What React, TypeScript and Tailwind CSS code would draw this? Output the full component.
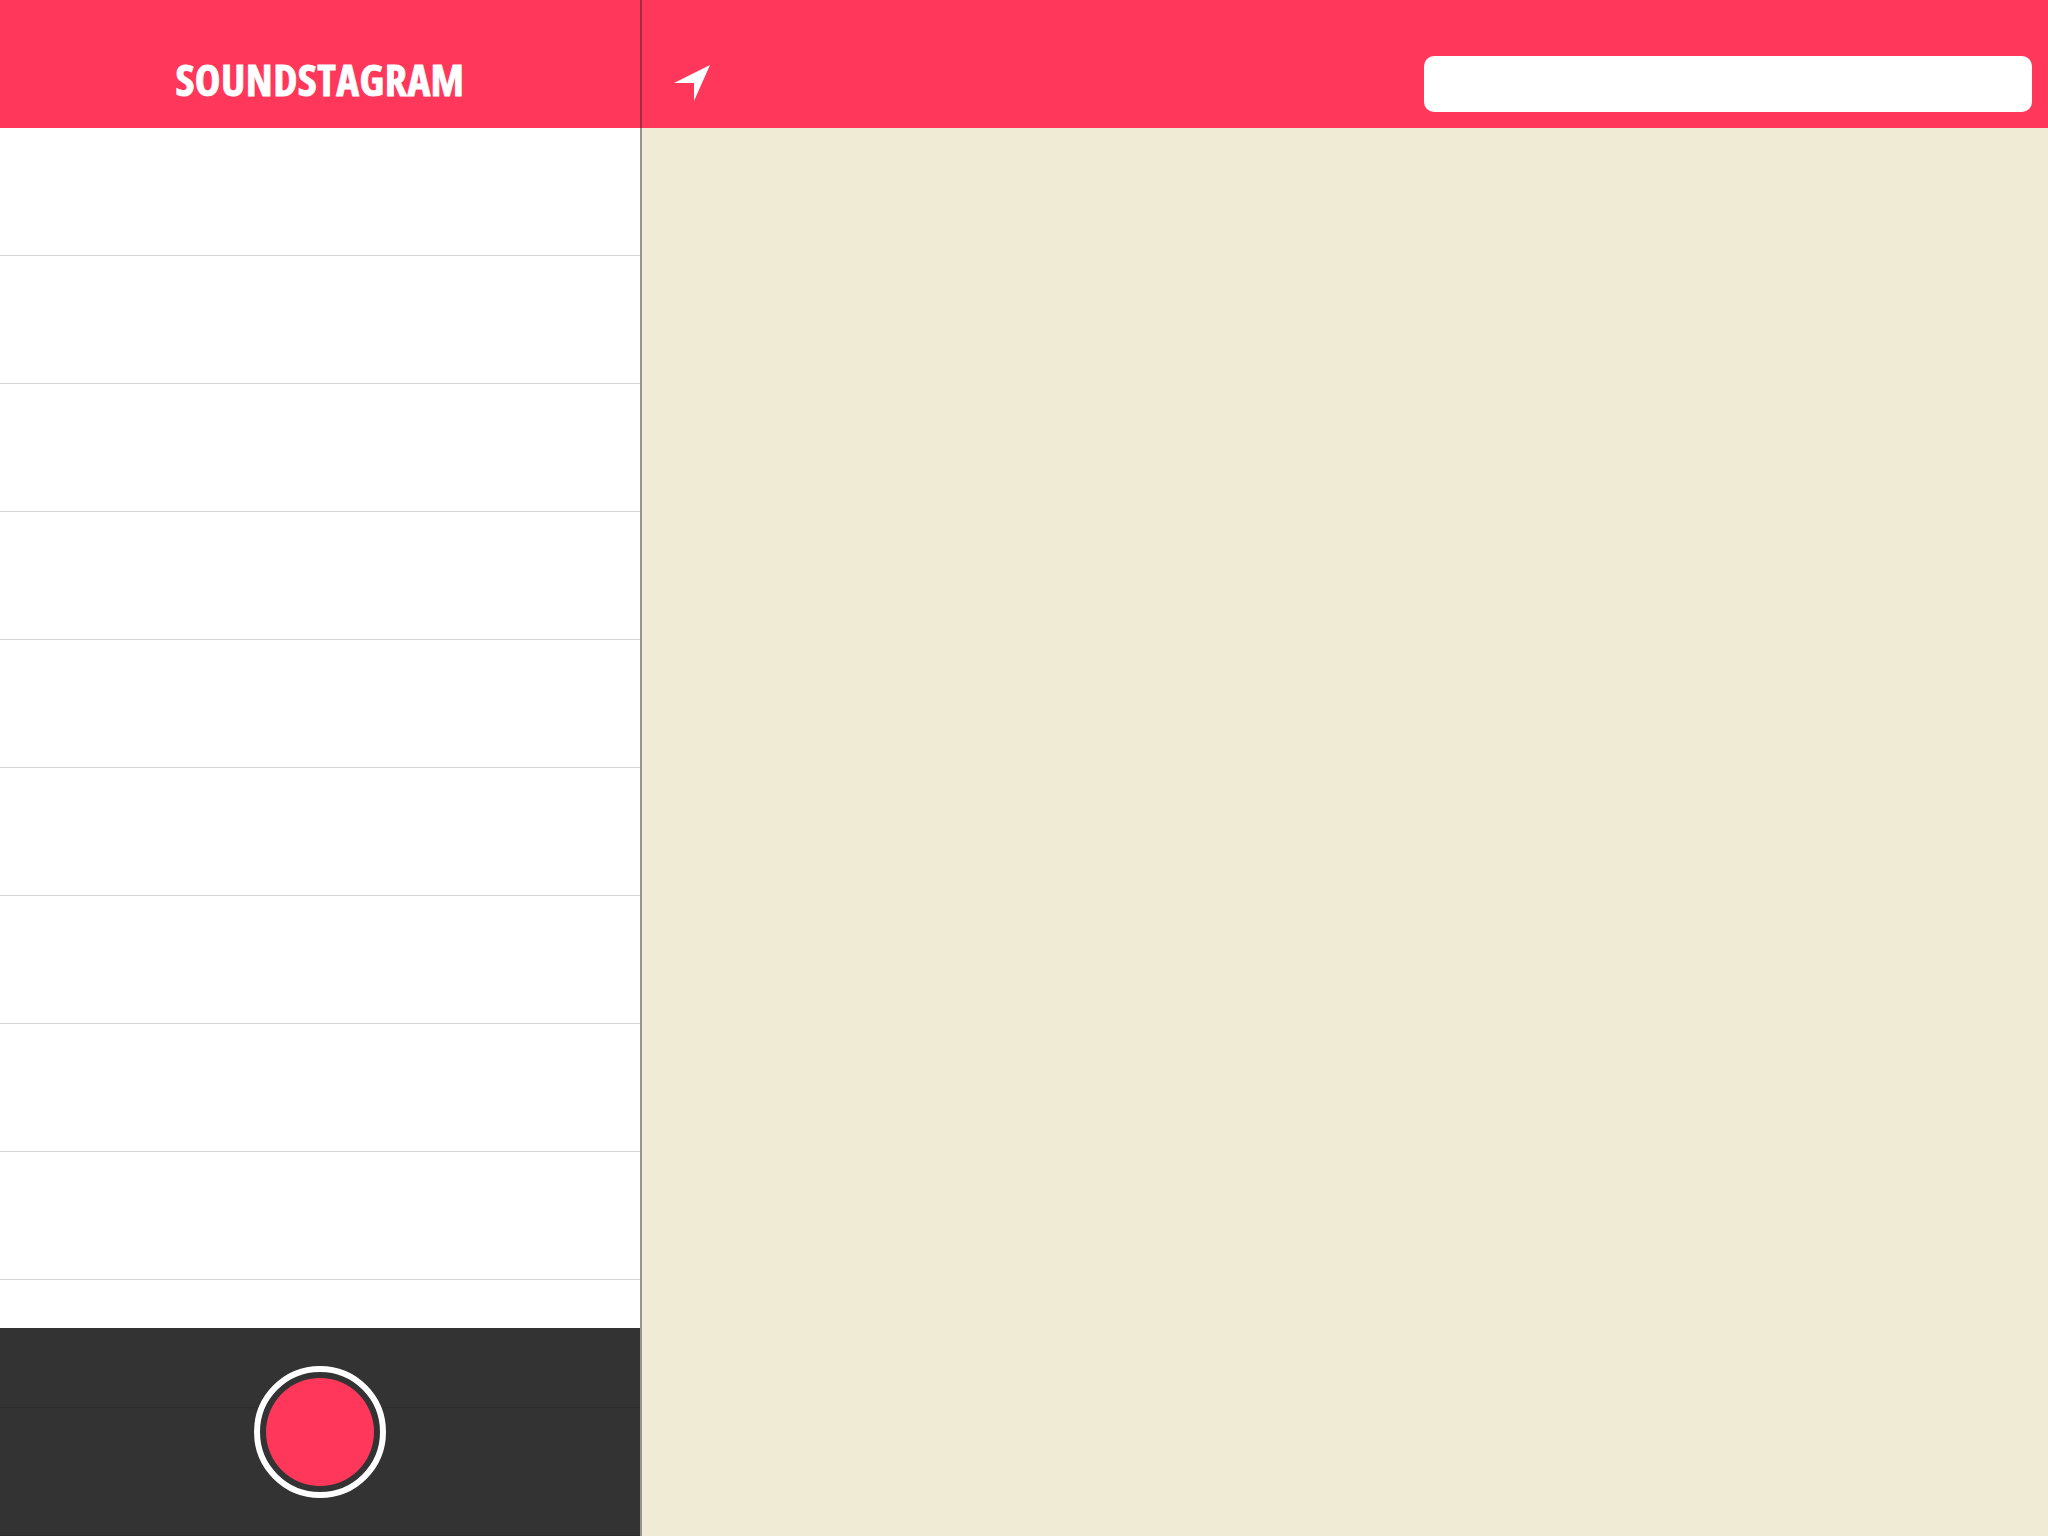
const rows = Array.from({ length: 9 }, (_, i) => i);

function Sidebar() {
  return (
    <aside className="flex h-full w-[640px] shrink-0 flex-col bg-white">
      <header className="flex h-32 shrink-0 items-end justify-center bg-[#ff375b]">
        <h1 className="mb-[19px] whitespace-nowrap font-['Open_Sans',sans-serif] text-[43.4px] leading-[59px] font-bold tracking-[0.4px] text-white [-webkit-text-stroke:0.8px_white] [font-stretch:75%]">
          SOUNDSTAGRAM
        </h1>
      </header>
      <ul className="min-h-0 flex-1 overflow-hidden">
        {rows.map((row) => (
          <li key={row} className="h-32 border-b border-[#d6d6d6]" />
        ))}
      </ul>
      <footer className="grid h-52 shrink-0 grid-cols-1 grid-rows-[80px_128px] bg-[#333333]">
        <div className="col-start-1 row-start-1 border-b border-[#2c2c2c]" />
        <div className="col-start-1 row-start-2 border-b border-[#2c2c2c]" />
        <button
          aria-label="Record"
          className="z-10 col-start-1 row-span-2 row-start-1 grid size-[132px] place-items-center self-center justify-self-center rounded-full border-[6px] border-white bg-[#333333]"
        >
          <span className="size-[108px] rounded-full bg-[#ff375b]" />
        </button>
      </footer>
    </aside>
  );
}

export default function App() {
  return (
    <div className="flex h-[1536px] w-[2048px] overflow-hidden bg-white">
      <Sidebar />
      <div className="flex w-0.5 shrink-0 flex-col">
        <div className="h-32 bg-[#a22d42]" />
        <div className="flex-1 bg-[#949494]" />
      </div>
      <main className="flex min-w-0 flex-1 flex-col">
        <header className="flex h-32 shrink-0 items-end justify-between bg-[#ff375b] pr-4 pb-4 pl-8">
          <svg className="mb-[11px] h-9 w-9" viewBox="0 0 36 36" fill="white">
            <path d="M36 0 20 36V18H0Z" />
          </svg>
          <input aria-label="Search" className="h-14 w-[608px] rounded-[10px] bg-white" />
        </header>
        <div className="flex-1 bg-[#f0ebd5]" />
      </main>
    </div>
  );
}
